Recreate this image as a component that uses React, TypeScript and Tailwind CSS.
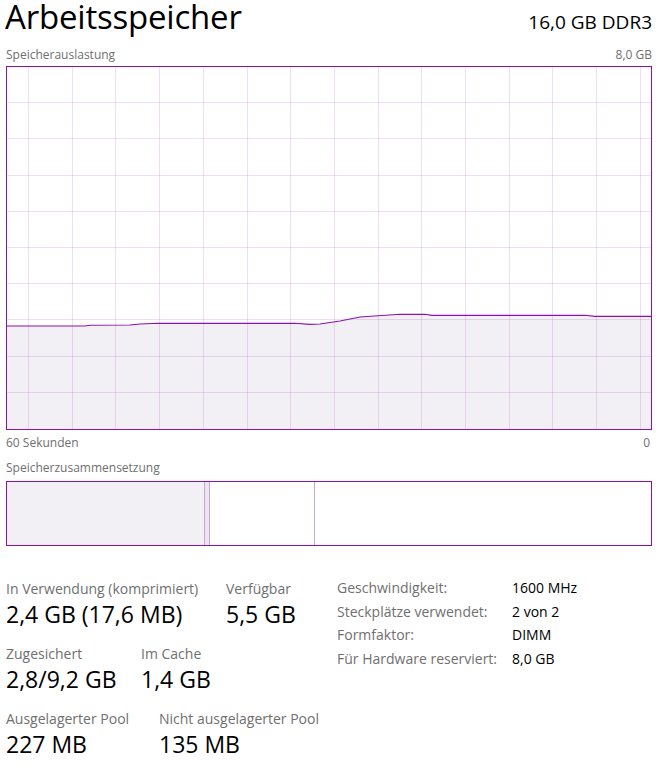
import React from "react";

const W = 644;
const H = 362;

// usage over the last 60 seconds, in chart coordinates (inner box)
const usage: [number, number][] = [
  [6, 326], [85, 326], [90, 325.3], [130, 325], [140, 324], [158, 323.3],
  [295, 323.3], [310, 324.3], [320, 324], [340, 321], [360, 317],
  [400, 314.3], [425, 314.3], [432, 315.3], [585, 315.3], [595, 316.3], [651, 316.3],
].map(([x, y]) => [x - 7, y - 67] as [number, number]);

function UsageChart() {
  const vLines = Array.from({ length: 15 }, (_, i) => Math.round(21 + i * 43.7) + 0.5);
  const hLines = Array.from({ length: 9 }, (_, i) => Math.round((i + 1) * 36.2) - 0.5);
  const line = usage.map(([x, y], i) => `${i ? "L" : "M"}${x},${y}`).join(" ");
  const area = `${line} L${W},${H} L0,${H} Z`;

  return (
    <div className="h-[364px] w-[646px] border border-[#8b12ae]">
      <svg width={W} height={H} className="block">
        <path d={area} fill="#f2f0f4" />
        <g stroke="#8b12ae" strokeOpacity={0.14} strokeWidth={1} shapeRendering="crispEdges">
          {vLines.map((x) => (
            <line key={x} x1={x} y1={0} x2={x} y2={H} />
          ))}
          {hLines.map((y) => (
            <line key={y} x1={0} y1={y} x2={W} y2={y} />
          ))}
        </g>
        <path d={line} fill="none" stroke="#8b12ae" strokeWidth={1.15} />
      </svg>
    </div>
  );
}

function CompositionBar() {
  return (
    <div className="flex h-[65px] w-[646px] border border-[#8b12ae]">
      <div className="w-[197px] bg-[#f2f0f4]" />
      <div className="w-px bg-[#caa6d8]" />
      <div className="w-[4px] bg-[#ece5ef]" />
      <div className="w-px bg-[#caa6d8]" />
      <div className="w-[104px]" />
      <div className="w-px bg-[#caa6d8]" />
      <div className="flex-1" />
    </div>
  );
}

function Stat({ label, value, width }: { label: string; value: string; width: string }) {
  return (
    <div className={width}>
      <div className="text-[14px] leading-[20px] text-[#6f6f6f]">{label}</div>
      <div className="text-[23px] leading-[30px] text-black">{value}</div>
    </div>
  );
}

const details = [
  ["Geschwindigkeit:", "1600 MHz"],
  ["Steckplätze verwendet:", "2 von 2"],
  ["Formfaktor:", "DIMM"],
  ["Für Hardware reserviert:", "8,0 GB"],
];

export default function App() {
  return (
    <div
      className="h-[769px] w-[659px] bg-white pl-[6px]"
      style={{ fontFamily: '"Segoe UI", "Open Sans", sans-serif' }}
    >
      <header className="flex h-[34px] w-[646px] items-baseline justify-between">
        <h1 className="-ml-[1px] text-[33px] leading-[34px] font-normal tracking-[-0.2px] text-black">
          Arbeitsspeicher
        </h1>
        <span className="text-[19px] leading-[24px] text-black">16,0 GB DDR3</span>
      </header>

      <div className="mt-[13px] flex w-[646px] justify-between text-[12px] leading-[16px] text-[#6f6f6f]">
        <span>Speicherauslastung</span>
        <span>8,0 GB</span>
      </div>
      <div className="mt-[3px]">
        <UsageChart />
      </div>
      <div className="mt-[5px] flex w-[646px] justify-between pr-[2px] text-[12px] leading-[16px] text-[#6f6f6f]">
        <span>60 Sekunden</span>
        <span>0</span>
      </div>
      <div className="mt-[9px] text-[12px] leading-[16px] text-[#6f6f6f]">Speicherzusammensetzung</div>
      <div className="mt-[5px]">
        <CompositionBar />
      </div>

      <section className="mt-[33px] flex">
        <div className="flex w-[331px] flex-col gap-[15px]">
          <div className="flex">
            <Stat label="In Verwendung (komprimiert)" value="2,4 GB (17,6 MB)" width="w-[220px]" />
            <Stat label="Verfügbar" value="5,5 GB" width="w-[100px]" />
          </div>
          <div className="flex">
            <Stat label="Zugesichert" value="2,8/9,2 GB" width="w-[135px]" />
            <Stat label="Im Cache" value="1,4 GB" width="w-[100px]" />
          </div>
          <div className="flex">
            <Stat label="Ausgelagerter Pool" value="227 MB" width="w-[153px]" />
            <Stat label="Nicht ausgelagerter Pool" value="135 MB" width="w-[170px]" />
          </div>
        </div>
        <div className="-mt-[3px] text-[14px] leading-[23.6px]">
          {details.map(([k, v]) => (
            <div key={k} className="flex">
              <span className="w-[175px] text-[#6f6f6f]">{k}</span>
              <span className="text-black">{v}</span>
            </div>
          ))}
        </div>
      </section>
    </div>
  );
}
